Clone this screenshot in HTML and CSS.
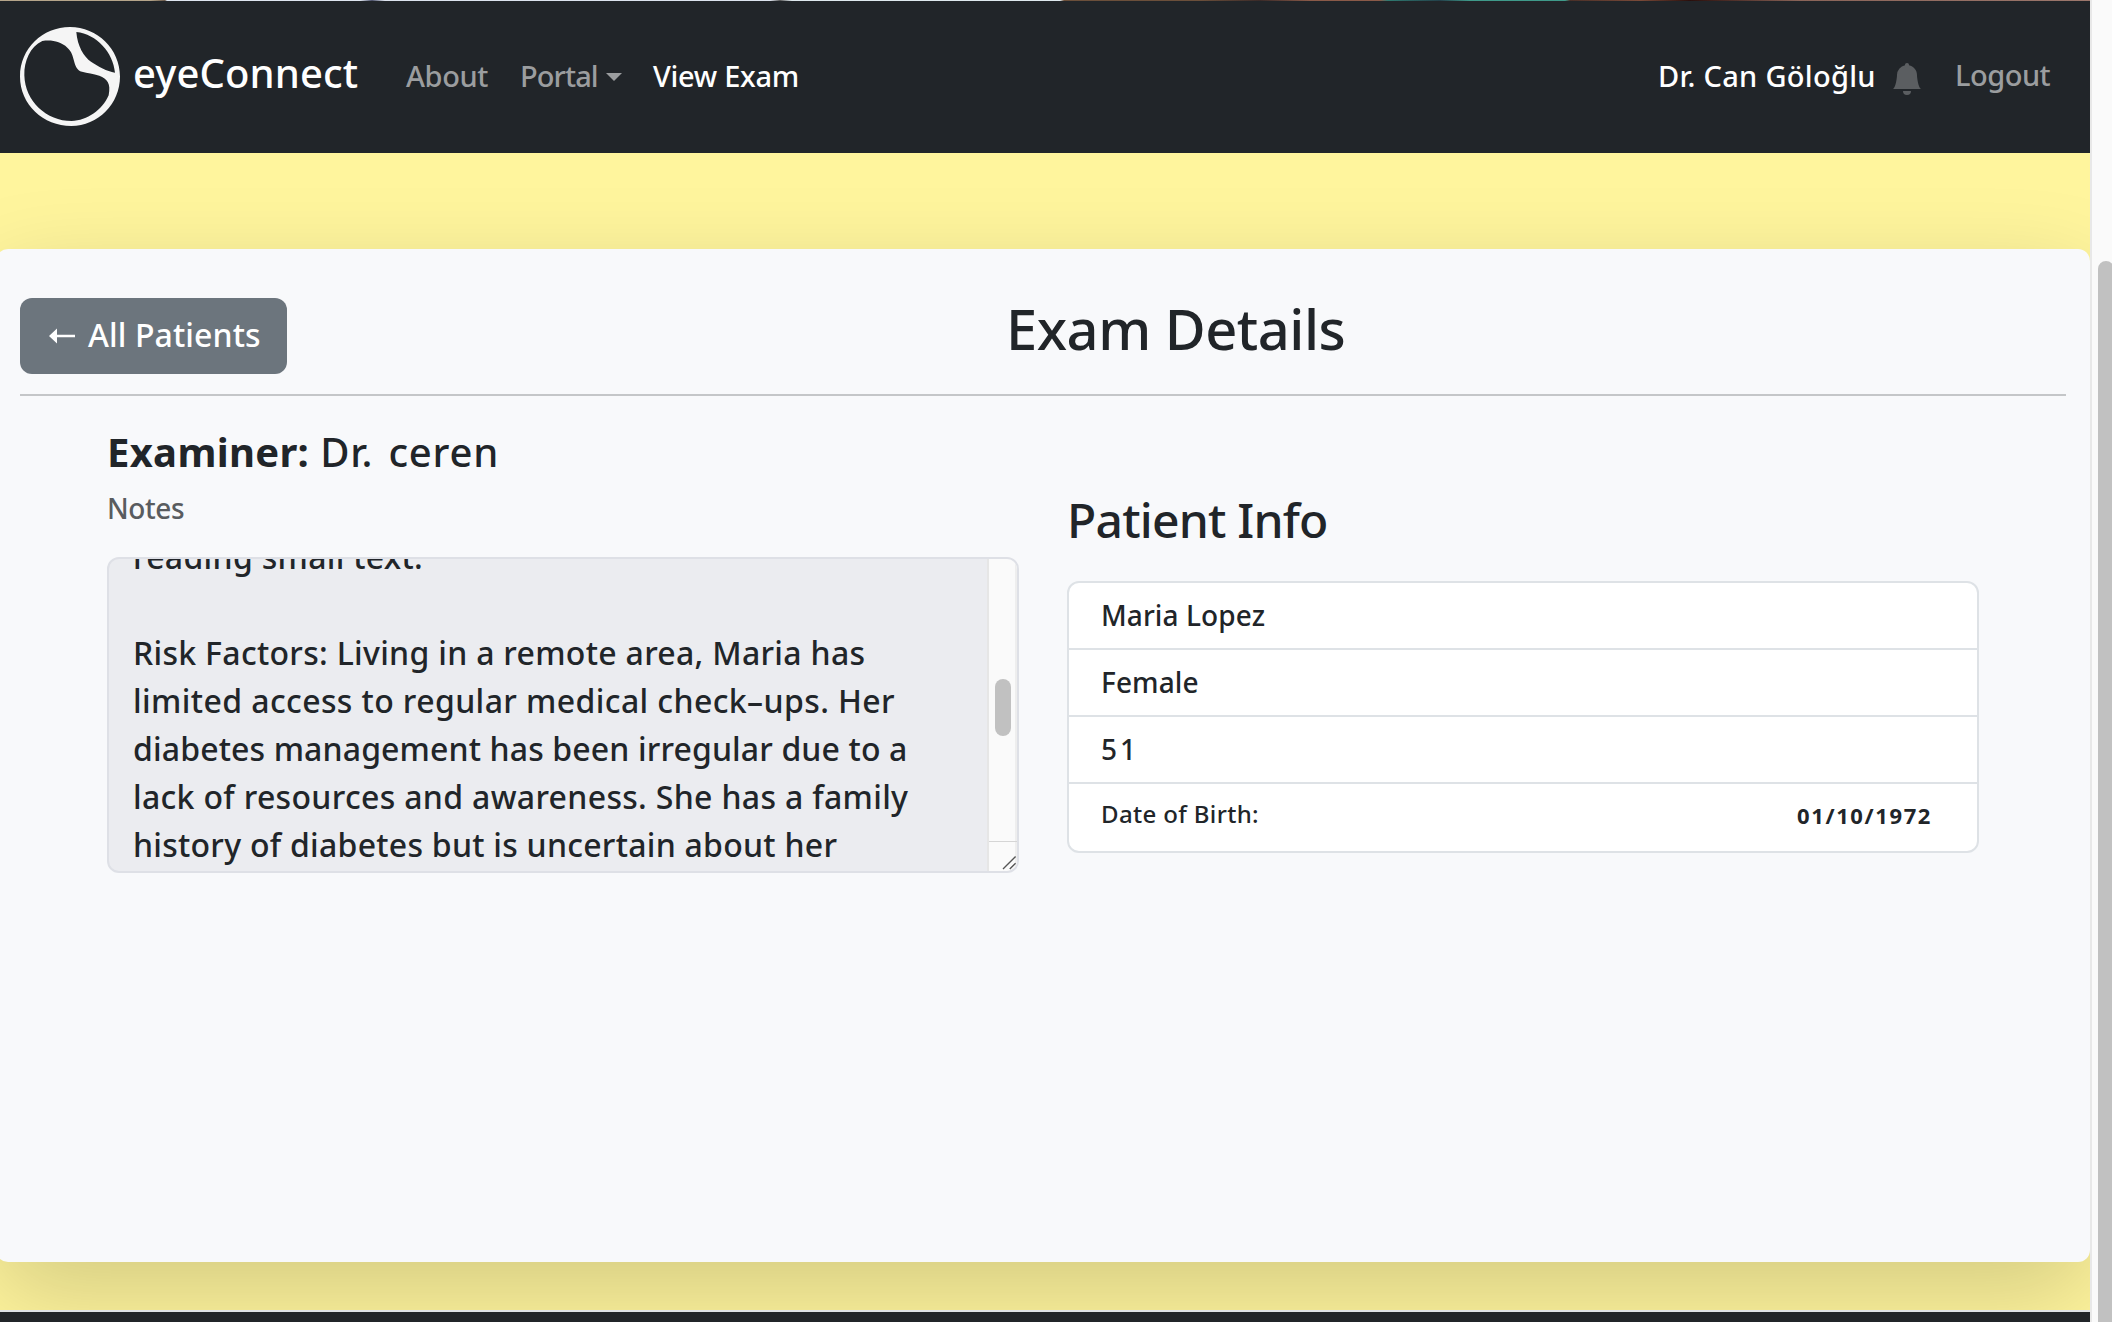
FILE: index.html
```html
<!DOCTYPE html>
<html lang="en">
<head>
<meta charset="utf-8">
<title>eyeConnect - View Exam</title>
<link rel="stylesheet" href="styles.css">
</head>
<body>
<div class="page">
  <div class="hero-edge"></div>
  <nav class="navbar">
    <svg class="logo" viewBox="60 53 300 296" preserveAspectRatio="none"><path fill="#f5f5f5" fill-rule="evenodd" d="M210 53C292 53 360 119 360 201S294 349 214 349C130 349 60 285 60 201S128 53 210 53ZM127 95C90 112 72 155 73 197C75 275 140 334 215 334C262 332 306 302 326 257C333 222 322 208 298 199C280 193 262 191 246 187C216 178 228 136 202 115C182 96 155 91 127 95ZM229 68C232 110 252 143 273 157C295 172 320 185 345 190C340 130 290 74 229 68Z"/></svg>
    <span class="brand">eyeConnect</span>
    <a class="link about">About</a>
    <a class="link portal">Portal</a><i class="caret"></i>
    <a class="link active">View Exam</a>
    <a class="link active doctor">Dr. Can Göloğlu</a>
    <svg class="bell" viewBox="0 0 16 16" fill="#5b5e61"><path d="M8 16a2 2 0 0 0 2-2H6a2 2 0 0 0 2 2m.995-14.901a1 1 0 1 0-1.99 0A5 5 0 0 0 3 6c0 1.098-.5 6-2 7h14c-1.5-1-2-5.902-2-7 0-2.42-1.72-4.44-4.005-4.901"/></svg>
    <a class="link logout">Logout</a>
  </nav>
  <main class="content">
    <section class="card">
      <header class="card-head">
        <button class="back"><svg class="arrow" viewBox="0 0 26 16"><path d="M0 8 8 0.5V6.7H26V9.3H8V15.5Z" fill="#fff"/></svg><span>All Patients</span></button>
        <h1 class="title">Exam Details</h1>
      </header>
      <div class="columns">
        <div class="exam">
          <p class="examiner"><b>Examiner:</b><span>Dr. ceren</span></p>
          <p class="notes-label">Notes</p>
          <div class="notes">
            <div class="notes-text">
              <p>reading small text.</p>
              <p>&nbsp;</p>
              <p>Risk Factors: Living in a remote area, Maria has</p>
              <p>limited access to regular medical check–ups. Her</p>
              <p>diabetes management has been irregular due to a</p>
              <p>lack of resources and awareness. She has a family</p>
              <p>history of diabetes but is uncertain about her</p>
            </div>
            <div class="notes-scroll"><i class="notes-thumb"></i>
              <svg class="grip" viewBox="0 0 28 30"><path d="M14 28 27 15M21 28 27 22" stroke="#555" stroke-width="1.4"/></svg>
            </div>
          </div>
        </div>
        <div class="patient">
          <h2 class="patient-title">Patient Info</h2>
          <ul class="info">
            <li>Maria Lopez</li>
            <li>Female</li>
            <li class="age">51</li>
            <li class="birth"><span>Date of Birth:</span><b>01/10/1972</b></li>
          </ul>
        </div>
      </div>
    </section>
  </main>
  <footer class="footer"></footer>
</div>
<div class="scrollbar"><i class="thumb"></i></div>
</body>
</html>
```
FILE: styles.css
```css
* { box-sizing: border-box; }
body {
  margin: 0;
  width: 2112px;
  height: 1322px;
  display: flex;
  overflow: hidden;
  font-family: "Noto Sans", "Open Sans", sans-serif;
  font-weight: 500;
  font-size: 32px;
  color: #212529;
}
p, h1, h2, ul { margin: 0; padding: 0; font-weight: inherit; }
b { font-weight: 700; }
.page { width: 2090px; height: 1322px; overflow: hidden; background: #fff59d; }
.hero-edge {
  height: 1px;
  background: linear-gradient(90deg, #b5a58a 0 150px, #6b5a4a 165px, #dfe6f0 167px 360px, #4a4f68 372px, #dde3ee 385px 770px, #555 780px, #dfe9ee 792px 1060px, #6b4f3a 1064px 1200px, #3a2a28 1260px, #8a5a48 1310px 1380px, #2f7a70 1388px, #23404a 1440px, #3f9a8a 1470px 1565px, #4a3028 1570px, #7a4a38 1640px, #2a0f0c 1690px, #8a6458 1800px, #9c776c);
}
.navbar { height: 152px; background: #212529; display: flex; align-items: center; padding-left: 20px; white-space: nowrap; }
.logo { width: 100px; height: 99px; margin-top: -1px; }
.brand { margin-left: 13px; font-size: 40px; letter-spacing: .1px; color: #fff; padding-bottom: 9px; width: 224px; }
.link { font-size: 29px; color: #9b9d9f; padding-bottom: 3px; }
.active { color: #fff; letter-spacing: -.3px; }
.about { margin-left: 49px; width: 114px; letter-spacing: -.4px; }
.portal { width: 86px; letter-spacing: -.9px; }
.caret { border: 8px solid transparent; border-top-color: #9b9d9f; border-bottom: 0; margin-right: 31px; }
.doctor { margin-left: auto; width: 233px; letter-spacing: .3px; }
.bell { width: 32px; height: 32px; margin-top: 4px; }
.logout { width: 135px; margin-left: 32px; padding-bottom: 5px; letter-spacing: -.5px; }
.content { height: 1157px; padding-top: 96px; overflow: hidden; }
.card { height: 1013px; margin-left: -4px; padding: 49px 24px 0; border-radius: 12px; background: #f8f9fb; box-shadow: 0 32px 96px rgba(0, 0, 0, .175); }
.card-head { height: 98px; border-bottom: 2px solid #c4c6c8; display: flex; }
.back { width: 267px; height: 76px; border: 0; border-radius: 12px; background: #6c757d; color: #fff; font: inherit; letter-spacing: .1px; display: flex; align-items: center; padding: 0 0 3px 29px; white-space: nowrap; }
.arrow { width: 26px; height: 16px; margin-right: 13px; margin-top: 3px; }
.title { font-size: 56px; line-height: 61px; letter-spacing: -.5px; flex: 1; padding-left: 719px; }
.columns { display: grid; grid-template-columns: 912px 912px; gap: 48px; padding-left: 87px; }
.examiner { font-size: 40px; line-height: 48px; margin-top: 32px; display: flex; gap: 11px; }
.examiner b { letter-spacing: .3px; }
.examiner span { letter-spacing: .8px; word-spacing: 4px; }
.notes-label { font-size: 28px; line-height: 42px; margin-top: 11px; letter-spacing: -.4px; color: #595c5f; }
.notes { margin-top: 28px; height: 316px; border: 2px solid #dee0e6; border-radius: 12px; background: #ebecf0; display: flex; justify-content: space-between; overflow: hidden; }
.notes-text { margin-top: -26px; padding-left: 24px; line-height: 48px; letter-spacing: .3px; white-space: nowrap; }
.notes-text p:nth-child(4) { letter-spacing: .4px; }
.notes-text p:nth-child(5) { letter-spacing: .13px; }
.notes-text p:nth-child(6) { letter-spacing: .32px; }
.notes-text p:nth-child(7) { letter-spacing: .26px; }
.notes-scroll { width: 30px; background: #fafafa; border-left: 2px solid #e6e6e6; border-right: 2px solid #eee; display: flex; flex-direction: column; justify-content: space-between; }
.notes-thumb { width: 16px; height: 57px; border-radius: 8px; background: #c1c1c1; margin: 120px 0 0 6px; }
.grip { width: 28px; height: 30px; border-top: 1px solid #d5d5d5; }
.patient-title { font-size: 48px; line-height: 58px; letter-spacing: -.8px; margin-top: 95px; }
.info { margin-top: 32px; height: 272px; list-style: none; background: #fff; border: 2px solid #dee2e6; border-radius: 12px; font-size: 28px; line-height: 65px; letter-spacing: .1px; }
.info li { height: 67px; padding: 0 46px 0 32px; border-bottom: 2px solid #dee2e6; }
.info li:last-child { border: 0; }
.info .age { letter-spacing: 3px; }
.info .birth { display: flex; justify-content: space-between; font-size: 24px; line-height: 60px; letter-spacing: .35px; }
.birth b { font-size: 22px; line-height: 63px; letter-spacing: 1.6px; margin-right: -1px; }
.footer { height: 12px; background: #212529; border-top: 2px solid #dee2e6; }
.scrollbar { width: 22px; background: #fafafa; border-left: 2px solid #e8e8e8; overflow: hidden; }
.thumb { display: block; width: 16px; height: 1100px; margin: 261px 0 0 6px; border-radius: 8px; background: #c1c1c1; }
```
